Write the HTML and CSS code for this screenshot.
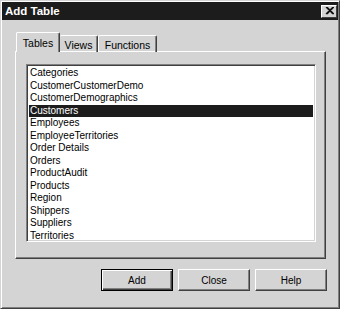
FILE: index.html
```html
<!DOCTYPE html>
<html>
<head>
    <title>Add Table</title>
    <link rel="stylesheet" href="styles.css">
</head>
<body>

<div class="window">
    <div class="title-bar">
        <span class="title-text">Add Table</span>
        <span class="close-btn">
            <svg width="9" height="8" viewBox="0 0 9 8">
                <path d="M1 0 L8 7 M2 0 L9 7 M8 0 L1 7 M9 0 L2 7" stroke="#111" stroke-width="1.2"/>
            </svg>
        </span>
    </div>

    <div class="tabs">
        <div class="tab tab-active tab-tables">Tables</div>
        <div class="tab tab-views">Views</div>
        <div class="tab tab-functions">Functions</div>
    </div>

    <div class="tab-panel">
        <div class="list-box">
            <div class="list-item">Categories</div>
            <div class="list-item">CustomerCustomerDemo</div>
            <div class="list-item">CustomerDemographics</div>
            <div class="list-item list-item-selected">Customers</div>
            <div class="list-item">Employees</div>
            <div class="list-item">EmployeeTerritories</div>
            <div class="list-item">Order Details</div>
            <div class="list-item">Orders</div>
            <div class="list-item">ProductAudit</div>
            <div class="list-item">Products</div>
            <div class="list-item">Region</div>
            <div class="list-item">Shippers</div>
            <div class="list-item">Suppliers</div>
            <div class="list-item">Territories</div>
        </div>
    </div>

    <div class="buttons">
        <button class="btn btn-default">Add</button>
        <button class="btn">Close</button>
        <button class="btn">Help</button>
    </div>
</div>

</body>
</html>
```

FILE: styles.css
```css
body {
    margin: 0;
    background: #ffffff;
    font-family: "Liberation Sans", Arial, sans-serif;
    font-size: 10px;
    color: #000000;
}

.window {
    box-sizing: border-box;
    width: 340px;
    height: 309px;
    padding: 1px;
    background: #d4d4d4;
    border: 1px solid;
    border-color: #d4d4d4 #404040 #404040 #d4d4d4;
    box-shadow: inset 1px 1px #ffffff, inset -1px -1px #808080;
}

.title-bar {
    height: 18px;
    background: #1c1c1c;
    display: flex;
    align-items: center;
    justify-content: space-between;
    padding: 0 1px 0 3px;
}

.title-text {
    color: #ffffff;
    font-weight: bold;
    font-size: 11.5px;
}

.close-btn {
    box-sizing: border-box;
    width: 16px;
    height: 13px;
    background: #d4d4d4;
    border: 1px solid;
    border-color: #ffffff #404040 #404040 #ffffff;
    display: flex;
    align-items: center;
    justify-content: center;
}

.tabs {
    display: flex;
    align-items: flex-end;
    margin: 12px 0 -1px 14px;
    position: relative;
}

.tab {
    box-sizing: border-box;
    height: 17px;
    padding-top: 3px;
    text-align: center;
    border-top: 1px solid #ffffff;
    border-left: 1px solid #ffffff;
    border-right: 1px solid #404040;
    box-shadow: inset -1px 0 #808080;
    border-radius: 2px 2px 0 0;
    font-size: 10.5px;
}

.tab-active {
    height: 20px;
    padding-top: 4px;
    background: #d4d4d4;
    position: relative;
    z-index: 1;
}

.tab-tables {
    width: 44px;
}

.tab-views {
    width: 38px;
    border-left: none;
}

.tab-functions {
    width: 59px;
}

.tab-panel {
    box-sizing: border-box;
    width: 311px;
    height: 208px;
    margin-left: 13px;
    padding: 12px 0 0 10px;
    border: 1px solid;
    border-color: #ffffff #404040 #404040 #ffffff;
    box-shadow: inset -1px -1px #808080;
}

.list-box {
    box-sizing: border-box;
    width: 290px;
    height: 178px;
    background: #ffffff;
    border: 1px solid;
    border-color: #808080 #ffffff #ffffff #808080;
    box-shadow: inset 1px 1px #404040, inset -1px -1px #d4d4d4;
    padding: 2px 2px 0 2px;
}

.list-item {
    height: 12.5px;
    line-height: 12.5px;
    padding-left: 1px;
    white-space: nowrap;
}

.list-item-selected {
    background: #1c1c1c;
    color: #ffffff;
}

.buttons {
    display: flex;
    gap: 5px;
    margin: 10px 0 0 99px;
}

.btn {
    box-sizing: border-box;
    width: 72px;
    height: 22px;
    margin: 0;
    padding: 0;
    background: #d4d4d4;
    font-family: "Liberation Sans", Arial, sans-serif;
    font-size: 10px;
    color: #000000;
    border: 1px solid;
    border-color: #ffffff #404040 #404040 #ffffff;
    box-shadow: inset -1px -1px #808080;
}

.btn-default {
    border: 1px solid #000000;
    box-shadow: inset 1px 1px #ffffff, inset -1px -1px #404040, inset -2px -2px #808080;
}
```
